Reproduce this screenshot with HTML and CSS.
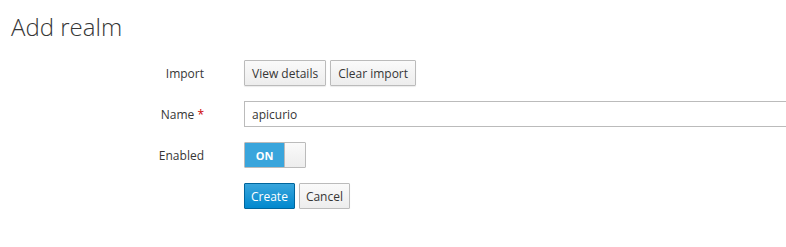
FILE: index.html
```html
<!DOCTYPE html>
<html lang="en">
<head>
  <meta charset="UTF-8" />
  <title>Add realm</title>
  <link rel="stylesheet" href="styles.css">
</head>
<body>

  <!-- page title -->
  <h1 class="page-title">Add realm</h1>

  <!-- realm form -->
  <form class="realm-form">
    <div class="form-row">
      <label class="form-label">Import</label>
      <div class="form-control">
        <button type="button" class="btn">View details</button>
        <button type="button" class="btn">Clear import</button>
      </div>
    </div>

    <div class="form-row">
      <label class="form-label" for="name">Name <span class="required">*</span></label>
      <div class="form-control">
        <input type="text" id="name" class="text-input" value="apicurio" />
      </div>
    </div>

    <div class="form-row">
      <label class="form-label">Enabled</label>
      <div class="form-control">
        <div class="switch">
          <span class="switch-on">ON</span>
          <span class="switch-handle"></span>
        </div>
      </div>
    </div>

    <div class="form-row">
      <span class="form-label"></span>
      <div class="form-control">
        <button type="button" class="btn btn-primary">Create</button>
        <button type="button" class="btn btn-cancel">Cancel</button>
      </div>
    </div>
  </form>

</body>
</html>
```

FILE: styles.css
```css
/* reset */
* {
  margin: 0;
  padding: 0;
  box-sizing: border-box;
}
body {
  background: #fff;
  color: #363636;
  font-family: "Open Sans", "Liberation Sans", sans-serif;
  font-size: 12px;
  overflow: hidden;
}

.page-title {
  margin: 14px 0 0 11px;
  font-size: 24px;
  font-weight: 300;
  line-height: 26px;
  color: #363636;
}

.realm-form {
  margin-top: 20px;
  display: flex;
  flex-direction: column;
  gap: 15px;
}
.form-row {
  display: flex;
  align-items: center;
  height: 26px;
}
.form-label {
  flex: 0 0 204px;
  text-align: right;
  color: #363636;
}
.required {
  color: #c00;
}
.form-control {
  margin-left: 40px;
  display: flex;
  gap: 4px;
  flex: 1;
  min-width: 0;
}

/* buttons */
.btn {
  font-family: inherit;
  font-size: 12px;
  color: #363636;
  height: 26px;
  padding: 0 7px;
  border: 1px solid #bbb;
  border-radius: 1px;
  background: linear-gradient(to bottom, #fafafa 0%, #ededed 100%);
  box-shadow: 0 1px 1px rgba(3, 3, 3, 0.08);
  cursor: pointer;
}
.btn-primary {
  color: #fff;
  padding: 0 6px;
  border-color: #00659c;
  background: linear-gradient(to bottom, #39a5dc 0%, #0088ce 100%);
}
.btn-cancel {
  padding: 0 6px;
}

/* text input: runs to the right edge of the view */
.text-input {
  flex: 1;
  height: 26px;
  padding: 0 7px;
  border: 1px solid #bbb;
  border-right: none;
  font-family: inherit;
  font-size: 12px;
  color: #363636;
}

/* on/off switch */
.switch {
  display: flex;
  width: 62px;
  height: 26px;
  border: 1px solid #bbb;
  border-radius: 1px;
  overflow: hidden;
}
.switch-on {
  width: 40px;
  background: #39a5dc;
  color: #fff;
  font-weight: 700;
  font-size: 11px;
  display: flex;
  align-items: center;
  justify-content: center;
  border-right: 1px solid #bbb;
}
.switch-handle {
  flex: 1;
  background: linear-gradient(to bottom, #fafafa 0%, #ededed 100%);
}
```
